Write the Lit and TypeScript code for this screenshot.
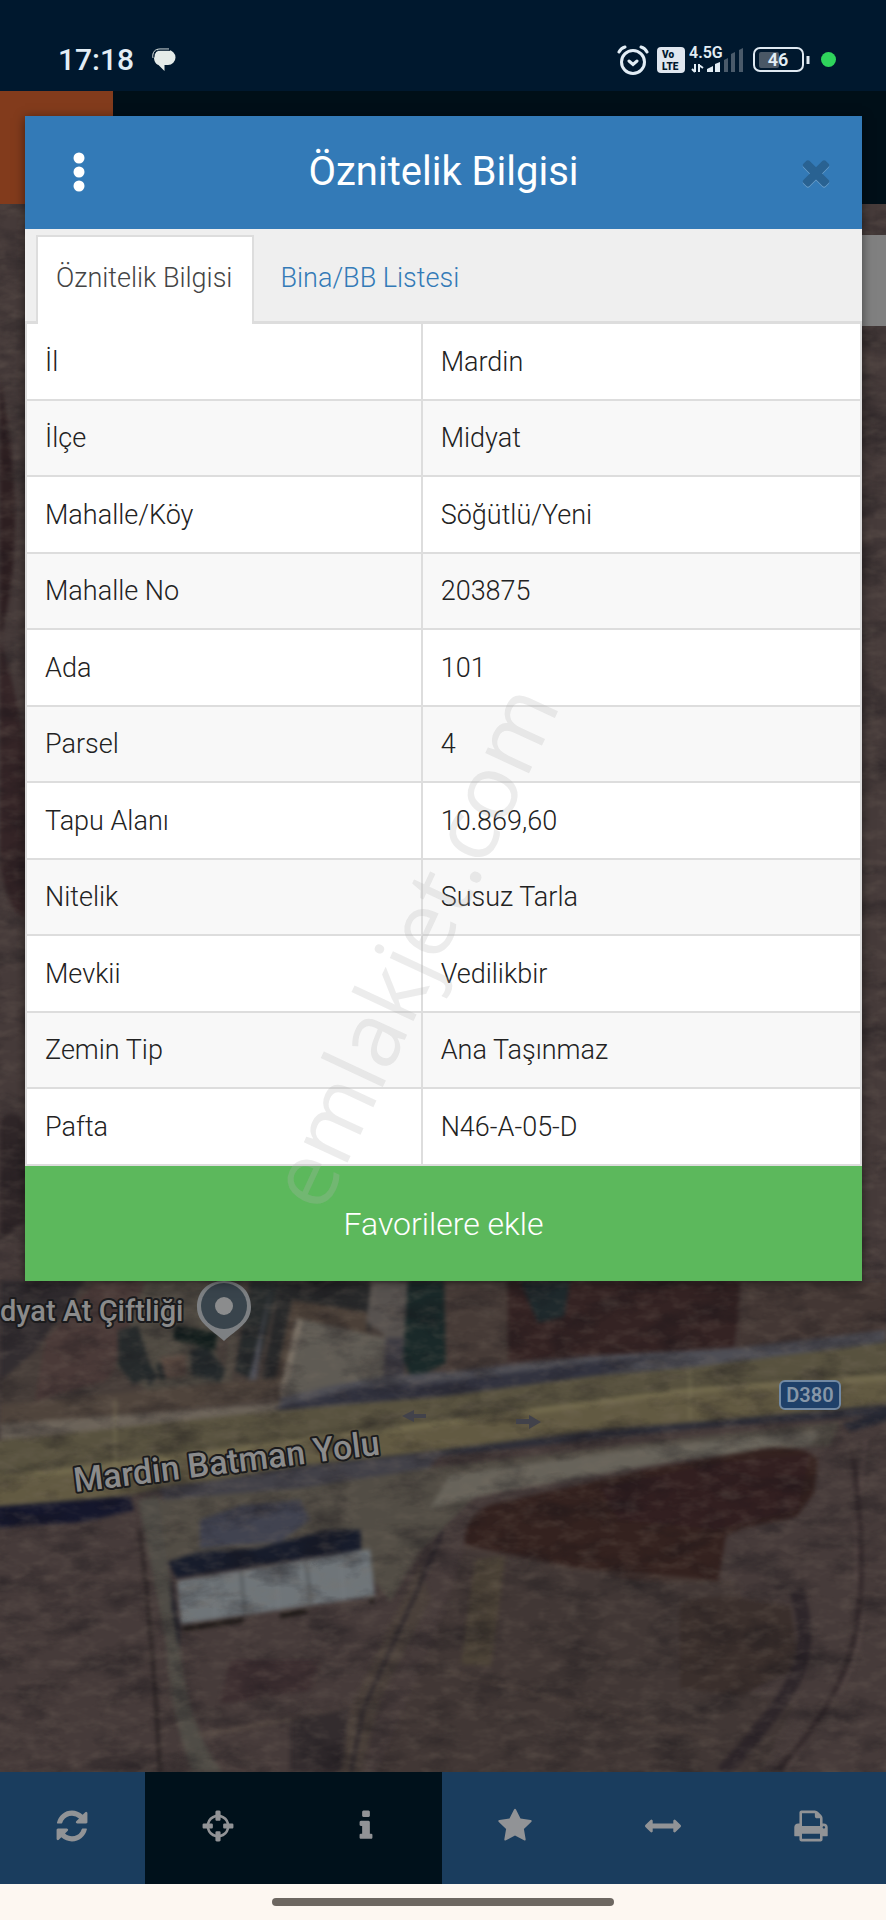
import { html, svg, css, LitElement } from "lit";
import { customElement, property, state } from "lit/decorators.js";
import { classMap } from "lit/directives/class-map.js";

interface ParcelField {
  label: string;
  value: string;
}

interface Tool {
  name: string;
  icon: string;
  dark?: boolean;
}

const icons: Record<string, string> = {
  refresh:
    "M1639 1056q0 5-1 7-64 268-268 434.5t-478 166.5q-146 0-282.5-55t-243.5-157l-129 129q-19 19-45 19t-45-19-19-45v-448q0-26 19-45t45-19h448q26 0 45 19t19 45-19 45l-137 137q71 66 161 102t187 36q134 0 250-65t186-179q11-17 53-117 8-23 30-23h192q13 0 22.5 9.5t9.5 22.5zm25-800v448q0 26-19 45t-45 19h-448q-26 0-45-19t-19-45 19-45l138-138q-148-137-349-137-134 0-250 65t-186 179q-11 17-53 117-8 23-30 23h-199q-13 0-22.5-9.5t-9.5-22.5v-7q65-268 270-434.5t480-166.5q146 0 284 55.5t245 156.5l130-129q19-19 45-19t45 19 19 45z",
  crosshairs:
    "M1325 1024h-109q-26 0-45-19t-19-45v-128q0-26 19-45t45-19h109q-32-108-112.5-188.5t-188.5-112.5v109q0 26-19 45t-45 19h-128q-26 0-45-19t-19-45v-109q-108 32-188.5 112.5t-112.5 188.5h109q26 0 45 19t19 45v128q0 26-19 45t-45 19h-109q32 108 112.5 188.5t188.5 112.5v-109q0-26 19-45t45-19h128q26 0 45 19t19 45v109q108-32 188.5-112.5t112.5-188.5zm339-192v128q0 26-19 45t-45 19h-143q-37 161-154.5 278.5t-278.5 154.5v143q0 26-19 45t-45 19h-128q-26 0-45-19t-19-45v-143q-161-37-278.5-154.5t-154.5-278.5h-143q-26 0-45-19t-19-45v-128q0-26 19-45t45-19h143q37-161 154.5-278.5t278.5-154.5v-143q0-26 19-45t45-19h128q26 0 45 19t19 45v143q161 37 278.5 154.5t154.5 278.5h143q26 0 45 19t19 45z",
  info: "M1216 1344v128q0 26-19 45t-45 19h-512q-26 0-45-19t-19-45v-128q0-26 19-45t45-19h64v-384h-64q-26 0-45-19t-19-45v-128q0-26 19-45t45-19h384q26 0 45 19t19 45v576h64q26 0 45 19t19 45zm-128-1152v192q0 26-19 45t-45 19h-256q-26 0-45-19t-19-45v-192q0-26 19-45t45-19h256q26 0 45 19t19 45z",
  star: "M1728 647q0 22-26 48l-363 354 86 500q1 7 1 20 0 21-10.5 35.5t-30.5 14.5q-19 0-40-12l-449-236-449 236q-22 12-40 12-21 0-31.5-14.5t-10.5-35.5q0-6 2-20l86-500-364-354q-25-27-25-48 0-37 56-46l502-73 225-455q19-41 49-41t49 41l225 455 502 73q56 9 56 46z",
  arrows:
    "M1792 896q0 26-19 45l-256 256q-19 19-45 19t-45-19-19-45v-128h-1024v128q0 26-19 45t-45 19-45-19l-256-256q-19-19-19-45t19-45l256-256q19-19 45-19t45 19 19 45v128h1024v-128q0-26 19-45t45-19 45 19l256 256q19 19 19 45z",
  print:
    "M448 1536h896v-256h-896v256zm0-640h896v-384h-160q-40 0-68-28t-28-68v-160h-640v640zm1152 64q0-26-19-45t-45-19-45 19-19 45 19 45 45 19 45-19 19-45zm128 0v416q0 13-9.5 22.5t-22.5 9.5h-224v160q0 40-28 68t-68 28h-960q-40 0-68-28t-28-68v-160h-224q-13 0-22.5-9.5t-9.5-22.5v-416q0-79 56.5-135.5t135.5-56.5h64v-544q0-40 28-68t68-28h672q40 0 88 20t76 48l152 152q28 28 48 76t20 88v256h64q79 0 135.5 56.5t56.5 135.5z",
  times:
    "M1490 1322q0 40-28 68l-136 136q-28 28-68 28t-68-28l-294-294-294 294q-28 28-68 28t-68-28l-136-136q-28-28-28-68t28-68l294-294-294-294q-28-28-28-68t28-68l136-136q28-28 68-28t68 28l294 294 294-294q28-28 68-28t68 28l136 136q28 28 28 68t-28 68l-294 294 294 294q28 28 28 68z"
};

@customElement("fa-icon")
export class FaIconElement extends LitElement {
  @property()
  name = "";

  override render() {
    return html`<svg viewBox="0 0 1792 1792" aria-hidden="true"><path d=${icons[this.name]} /></svg>`;
  }

  static styles = css`
    :host {
      display: block;
      width: 36px;
      height: 36px;
    }

    svg {
      display: block;
      width: 100%;
      height: 100%;
      fill: currentColor;
    }
  `;
}

@customElement("status-bar")
export class StatusBarElement extends LitElement {
  override render() {
    return html`
      <span class="time">17:18</span>
      <svg width="24" height="24" viewBox="0 0 24 24" fill="#e4ebe9">
        <path d="M8 2h8a7.5 7.5 0 0 1 0 15h-3.5v6l-6-6C3 16 2 12 2 9.5 2 5 4.5 2 8 2z" />
        <path d="M1 10C0 4 3 1 8 1h9" fill="none" stroke="#e4ebe9" stroke-width="1" />
        <path d="M2 9.5C2 5 4.5 2.3 8 2.3h10" fill="none" stroke="#00182e" stroke-width="1" />
      </svg>
      <div class="icons">
        <svg width="32" height="30" viewBox="0 0 32 30" fill="none" stroke="#e2edf5" stroke-width="3" stroke-linecap="round">
          <circle cx="16" cy="17" r="11.5" />
          <path d="M2 7q2-4 6-5M30 7q-2-4-6-5M12 16l4 3.5 4-3.5" />
        </svg>
        <div class="network">
          <svg class="volte" width="28" height="26" viewBox="0 0 28 26">
            <rect width="28" height="26" rx="4" fill="#dfe6ef" />
            <text x="5" y="11" font-size="10">Vo</text>
            <text x="5" y="23" font-size="10">LTE</text>
          </svg>
          <svg class="signal" width="56" height="36" viewBox="0 -3 56 36">
            <text x="0" y="13" font-size="16">4.5G</text>
            <path d="M6 19v8M3 24l3 3M10 27v-8M10 20l4 3" stroke="#e2edf5" stroke-width="2" fill="none" />
            <path d="M18 27v-3l6-3v6zM26 27v-8l5-2v10z" fill="#e2edf5" />
            <path d="M35 27V15l4-2v14zM42 27V9l4-2v20zM50 27V5l4-2v24z" fill="#4a5a6a" />
          </svg>
        </div>
        <svg class="battery" width="58" height="26" viewBox="0 0 58 26">
          <rect x="6" y="5" width="20" height="16" rx="2" fill="#4a5866" />
          <rect x="1" y="1" width="49" height="23" rx="6" fill="none" stroke="#dfe9f2" stroke-width="2" />
          <path d="M55 9v8" stroke="#dfe9f2" stroke-width="3" />
          <text x="25" y="19" text-anchor="middle" font-size="18">46</text>
        </svg>
        <span class="dot"></span>
      </div>
    `;
  }

  static styles = css`
    :host {
      display: flex;
      align-items: center;
      gap: 18px;
      box-sizing: border-box;
      height: 91px;
      padding: 28px 50px 0 58px;
      background: #00182e;
      color: #e2edf5;
      font-family: Roboto, sans-serif;
    }

    .time {
      font-size: 30px;
      font-weight: 500;
    }

    .icons {
      display: flex;
      align-items: center;
      gap: 8px;
      margin-left: auto;
    }

    .network {
      display: flex;
      align-items: center;
      gap: 4px;
    }

    .volte text {
      font-weight: 900;
      fill: #00182e;
    }

    .signal text,
    .battery text {
      font-weight: 600;
      fill: #e2edf5;
    }

    .dot {
      width: 15px;
      height: 15px;
      margin-left: 2px;
      border-radius: 50%;
      background: #2fd45c;
    }
  `;
}

@customElement("satellite-map")
export class SatelliteMapElement extends LitElement {
  terrain() {
    return svg`
      <path d="M0 380q30 150 0 260z" fill="#2d1f21" />
      <path d="M0 640q20 60 26 120v160q-20-10-26-60z" fill="#352527" />
      <path d="M0 1120q24-20 26 20v80l-26 20z" fill="#2f2628" />
      <path d="M0 1281h443v120L0 1440z" fill="#463d39" />
      <path d="M0 1281h85l-50 70-35 30z" fill="#322d30" />
      <path d="M95 1281h80l-10 30-60 70-70 20 10-60z" fill="#4a3a38" />
      <path d="M145 1281h100l-30 70 20 40-80 5-40-30z" fill="#4f4a42" />
      <path d="M118 1330l20-5 15 50-20 10-15-20zM250 1281h30l-25 100-20-10z" fill="#272b2c" />
      <path d="M140 1372l8-10 10 14-8 10zM156 1364l12-2 2 16-10 2zM190 1350l16-4 20 24-6 12-28-6z" fill="#23282a" />
      <path d="M160 1358l26-4v22l-20 2z" fill="#5d4c43" />
      <path d="M175 1325l43 8-3 18-42-12z" fill="#121d1c" />
      <path d="M236 1281h10l-16 110h-8z" fill="#4d4740" />
      <path d="M262 1335l10-50-24 98 8 3z" fill="#55565f" />
      <path d="M280 1281h90v50l-75-15-20 80-15-5z" fill="#28292a" />
      <path d="M292 1300l75 12v24l-73-17-13 76-8-3z" fill="#4b4038" />
      <path d="M297 1318l88 20-2 45-105 13z" fill="#5f5b54" />
      <path d="M297 1318l6 4-19 74h-6z" fill="#7a7166" />
      <path d="M372 1281h36l-4 95-22 6 2-48-18-12z" fill="#57524f" />
      <path d="M386 1338h18v40l-20 4z" fill="#3d3b42" />
      <path d="M408 1281h36l6 80-38 18-9-20z" fill="#1a2929" />
      <path d="M444 1281h76l-12 80-62 15z" fill="#463b37" />
      <path d="M508 1281h236l-10 66-226 14z" fill="#342323" />
      <path d="M520 1281h50l-6 36-26 6z" fill="#1f292c" />
      <path d="M740 1281h146v60l-150 10z" fill="#433734" />

      <path d="M0 1405l280-28v20L0 1432z" fill="#4f443c" />
      <path d="M0 1441q140-14 283-28v-10L0 1424z" fill="#6b6359" />
      <path d="M280 1398q90-24 168-26l140-16 150-8 148-18v16L600 1380l-320 32z" fill="#4e4e55" />
      <path d="M275 1408l80-20 88-6 150-20 55-4-60 22-160 18-153 12z" fill="#32333f" />

      <path d="M-9 1441q149-15 292-31l160-14 150-20 110-10 192-25v63l-195 18-100 8-157 20-143 18-150 24-159 23z" fill="#58523f" />
      <path d="M-9 1479q249-29 452-53 150-26 257-38l195-11v25l-195 18-100 8-157 20-143 18-150 24-159 23z" fill="#625a42" />
      <path d="M-9 1472l452-55 260-32 192-15" fill="none" stroke="#474334" stroke-width="2" />
      <path d="M-9 1480q249-29 452-57l240-32 212-14" fill="none" stroke="#726a4d" stroke-width="6" />
      <path d="M115 1400v68M690 1370v50" stroke="#8c8562" />

      <path d="M130 1494l170-28 143-16 157-20 100-8 195-18v10l-195 14-257 28-143 22-150 14z" fill="#2d2e38" />
      <path d="M160 1487l283-36-20 24-120 17-140 8z" fill="#424148" />
      <path d="M-9 1507l139-11 4 14-50 12-93 6z" fill="#15172c" />

      <path d="M158 1500l142-12 143-22 207-24 190-20-10 24-90 2-140 22-120 22-60 60-30 50-40-55-195 14z" fill="#524d45" />
      <path d="M450 1475l200-28 170-16-10 15-130 14-190 34-60 14z" fill="#67635a" />
      <path d="M200 1520l40-14 60-6 10 20-30 22-80 6z" fill="#414350" />
      <path d="M138 1500l20-6 22 150q6 80 42 128h-30q-22-60-26-130z" fill="#4f4c46" />
      <path d="M140 1530q14 120 20 242" fill="none" stroke="#241e1f" stroke-width="3" />

      <path d="M168 1562l30-10 60-4 70-18h33v20l-55 8-130 20z" fill="#171c2b" />
      <path d="M170 1570l10 60v20l-8-40z" fill="#20212a" />
      <path d="M177 1581l193-32 5 47-194 28z" fill="#6f7579" />
      <path d="M241 1570l4 46M306 1559l5 47" stroke="#4a4e51" stroke-width="2" />
      <path d="M212 1575l3 45M276 1565l3 46M340 1554l4 47" stroke="#7b8085" />
      <path d="M183 1629l60-9M280 1616l27-5M370 1600h4" stroke="#15120f" stroke-width="4" />

      <path d="M420 1565l-20 40-50 105-10 70h20l20-80 50-100z" fill="#4a403a" />
      <path d="M443 1530l-30 70-50 110-12 62" fill="none" stroke="#29242a" stroke-width="3" />
      <path d="M200 1735l160-28" stroke="#564a43" stroke-width="3" />
      <path d="M230 1660h90l-10 30-90 14z" fill="#3c2e30" />
      <path d="M290 1720l60-12-10 64h-50z" fill="#332c2e" />

      <path d="M465 1547l115 20 160 18-16 100 70 20-40 80H372l71-170z" fill="#413735" />
      <path d="M465 1545q-2-28 25-40l150-34 120-22q40-6 58 10l-4 34-18 24-50 10-20 8-8 48-86-4-60-12z" fill="#34221f" />
      <path d="M600 1488l120-26 90-8-12 56-80 20-100-10z" fill="#321f20" />
      <path d="M475 1560l30-4-14 110-30-2z" fill="#4c4337" />
      <path d="M680 1600l50-4 60 10 10 60-60 30-60-8z" fill="#3a2f2c" />
      <path d="M443 1670l270 70M465 1548l100 20 170 16" fill="none" stroke="#4d413c" stroke-width="3" />
      <path d="M796 1590q22 60-14 110t-60 72" fill="none" stroke="#2e262a" stroke-width="14" />
      <path d="M866 1440q-16 120-4 180-6 60-40 90l-36 62" fill="none" stroke="#544745" stroke-width="4" />
      <path d="M852 1450q16 110 4 180t-80 142" fill="none" stroke="#32282a" stroke-width="5" />
      <path d="M842 1424l53-15v10l-44 12z" fill="#262833" />
    `;
  }

  override render() {
    return html`
      <svg class="map" viewBox="0 204 886 1568" preserveAspectRatio="xMidYMax slice" role="img" aria-label="Uydu haritası">
        <defs>
          <filter id="dark" x="0" y="0" width="100%" height="100%" color-interpolation-filters="sRGB">
            <feTurbulence type="fractalNoise" baseFrequency="0.02 0.04" numOctaves="5" seed="4" />
            <feColorMatrix values="0 0 0 0 0.08  0 0 0 0 0.07  0 0 0 0 0.09  2 0 0 0 -0.9" />
          </filter>
          <filter id="light" x="0" y="0" width="100%" height="100%" color-interpolation-filters="sRGB">
            <feTurbulence type="fractalNoise" baseFrequency="0.05 0.1" numOctaves="3" seed="11" />
            <feColorMatrix values="0 0 0 0 0.5  0 0 0 0 0.45  0 0 0 0 0.4  0 1.6 0 0 -0.7" />
          </filter>
          <filter id="soft" color-interpolation-filters="sRGB"><feGaussianBlur stdDeviation="2" /></filter>
        </defs>
        <rect y="204" width="886" height="1568" fill="#463b3a" />
        <g filter="url(#soft)">${this.terrain()}</g>
        <rect y="204" width="886" height="1568" filter="url(#dark)" opacity="0.5" />
        <rect y="204" width="886" height="1568" filter="url(#light)" opacity="0.3" />

        <path d="M402 1416l12-6v4h12v4h-12v4zM541 1422l-12-7v4h-13v5h13v5z" fill="#42424a" />
        <path d="M224 1281c-18 0-27 12-27 26 0 16 14 22 27 34 13-12 27-18 27-34 0-14-9-26-27-26z" fill="#7d8083" />
        <circle cx="224" cy="1306" r="23" fill="#39444c" />
        <circle cx="224" cy="1306" r="9" fill="#8b8c8d" />
        <text class="place" x="0" y="1321">dyat At Çiftliği</text>
        <text class="road" transform="translate(75 1492) rotate(-7)">Mardin Batman Yolu</text>
        <rect x="780" y="1381" width="60" height="28" rx="5" fill="#1f4069" stroke="#7289a3" stroke-width="2" />
        <text class="shield" x="810" y="1402" text-anchor="middle">D380</text>
      </svg>
      <div class="drawer"></div>
    `;
  }

  static styles = css`
    :host {
      display: block;
      position: relative;
      overflow: hidden;
      font-family: Roboto, sans-serif;
    }

    .map {
      position: absolute;
      inset: 0;
      width: 100%;
      height: 100%;
    }

    .place,
    .road {
      fill: #8b8b8b;
      stroke: #1b1b1d;
      stroke-width: 4px;
      paint-order: stroke;
      stroke-linejoin: round;
      font-weight: 500;
    }

    .place {
      font-size: 29px;
    }

    .road {
      font-size: 34px;
    }

    .shield {
      fill: #8797a8;
      font-size: 20px;
      font-weight: 600;
    }

    .drawer {
      position: absolute;
      top: 31px;
      right: 0;
      width: 24px;
      height: 91px;
      background: #808080;
    }
  `;
}

@customElement("parcel-dialog")
export class ParcelDialogElement extends LitElement {
  @property({ type: Array })
  fields: ParcelField[] = [];

  @state()
  private activeTab = 0;

  private tabs = ["Öznitelik Bilgisi", "Bina/BB Listesi"];

  override render() {
    return html`
      <header class="header">
        <button class="menu" aria-label="Menü">
          <svg width="12" height="40" viewBox="0 0 12 40" fill="#fff">
            <circle cx="6" cy="6" r="5.5" />
            <circle cx="6" cy="20" r="5.5" />
            <circle cx="6" cy="34" r="5.5" />
          </svg>
        </button>
        <h1 class="title">Öznitelik Bilgisi</h1>
        <button class="close" aria-label="Kapat"><fa-icon class="times" name="times"></fa-icon></button>
      </header>

      <div class="tabs" role="tablist">
        ${this.tabs.map(
          (tab, i) => html`
            <button
              role="tab"
              aria-selected=${i === this.activeTab ? "true" : "false"}
              class=${classMap({ tab: true, active: i === this.activeTab })}
              @click=${() => (this.activeTab = i)}
            >
              ${tab}
            </button>
          `
        )}
      </div>

      <table class="table">
        <tbody>
          ${this.fields.map(
            (f) => html`
              <tr>
                <th scope="row">${f.label}</th>
                <td>${f.value}</td>
              </tr>
            `
          )}
        </tbody>
      </table>

      <button class="favorite">Favorilere ekle</button>
    `;
  }

  static styles = css`
    :host {
      display: flex;
      flex-direction: column;
      background: #fff;
      box-shadow: 0 2px 10px rgba(0, 0, 0, 0.5);
      font-family: Roboto, sans-serif;
      font-weight: 300;
      color: #222;
    }

    button {
      border: none;
      background: none;
      padding: 0;
      font: inherit;
      color: inherit;
      cursor: pointer;
    }

    .header {
      display: grid;
      grid-template-columns: 108px 1fr 108px;
      align-items: center;
      height: 113px;
      padding-bottom: 2px;
      box-sizing: border-box;
      background: #337ab7;
      color: #fff;
    }

    .title {
      margin: 0;
      font-size: 40px;
      font-weight: 400;
      text-align: center;
    }

    .menu,
    .close {
      display: grid;
      place-items: center;
      height: 100%;
    }

    .close {
      padding-left: 16px;
    }

    .times {
      width: 40px;
      height: 40px;
      color: #296292;
      filter: drop-shadow(0 1px 0 #6b9fcb);
    }

    .tabs {
      display: flex;
      gap: 5px;
      box-sizing: border-box;
      height: 95px;
      padding: 6px 11px 0;
      background: #efefef;
      border-bottom: 3px solid #ddd;
    }

    .tab {
      padding: 0 19px 2px;
      border: 2px solid transparent;
      border-bottom: none;
      font-size: 27px;
      color: #337ab7;
    }

    .tab.active {
      margin-bottom: -3px;
      padding: 0 20px 5px 18px;
      border-color: #ddd;
      background: #fff;
      color: #444;
    }

    .table {
      width: 100%;
      table-layout: fixed;
      border-collapse: separate;
      border-spacing: 0;
      border: solid #ddd;
      border-width: 0 2px;
      font-size: 27px;
    }

    tr {
      height: 77px;
    }

    tr:nth-child(even) {
      height: 76px;
      background: #f8f8f8;
    }

    th,
    td {
      box-sizing: border-box;
      padding: 0 18px;
      border-bottom: 2px solid #ddd;
      text-align: left;
      font-weight: 300;
    }

    th {
      width: 47.5%;
      border-right: 2px solid #ddd;
    }

    .favorite {
      height: 115px;
      background: #5cb85c;
      color: #fff;
      font-size: 32px;
    }
  `;
}

@customElement("app-root")
export class AppRootElement extends LitElement {
  private fields: ParcelField[] = [
    { label: "İl", value: "Mardin" },
    { label: "İlçe", value: "Midyat" },
    { label: "Mahalle/Köy", value: "Söğütlü/Yeni" },
    { label: "Mahalle No", value: "203875" },
    { label: "Ada", value: "101" },
    { label: "Parsel", value: "4" },
    { label: "Tapu Alanı", value: "10.869,60" },
    { label: "Nitelik", value: "Susuz Tarla" },
    { label: "Mevkii", value: "Vedilikbir" },
    { label: "Zemin Tip", value: "Ana Taşınmaz" },
    { label: "Pafta", value: "N46-A-05-D" }
  ];

  private tools: Tool[] = [
    { name: "Yenile", icon: "refresh" },
    { name: "Konum", icon: "crosshairs", dark: true },
    { name: "Bilgi", icon: "info", dark: true },
    { name: "Favoriler", icon: "star" },
    { name: "Ölçüm", icon: "arrows" },
    { name: "Yazdır", icon: "print" }
  ];

  override render() {
    return html`
      <status-bar></status-bar>
      <div class="app-header"><div class="brand"></div></div>
      <satellite-map class="map"></satellite-map>
      <nav class="toolbar">
        ${this.tools.map(
          (t) => html`
            <button class=${classMap({ tool: true, dark: !!t.dark })} aria-label=${t.name}>
              <fa-icon name=${t.icon}></fa-icon>
            </button>
          `
        )}
      </nav>
      <div class="gesture"><div class="pill"></div></div>

      <parcel-dialog class="dialog" .fields=${this.fields}></parcel-dialog>

      <svg class="watermark" viewBox="0 0 886 1920" preserveAspectRatio="xMidYMin meet" aria-hidden="true">
        <text transform="translate(442 960) rotate(-65)" text-anchor="middle">emlakjet.com</text>
      </svg>
    `;
  }

  static styles = css`
    :host {
      display: flex;
      flex-direction: column;
      position: relative;
      min-height: 100vh;
    }

    .app-header {
      height: 113px;
      background: #000f18;
    }

    .brand {
      width: 113px;
      height: 100%;
      background: #823b1c;
    }

    .map {
      flex: 1;
      min-height: 1100px;
    }

    .toolbar {
      display: grid;
      grid-template-columns: 49fr repeat(5, 50fr);
      height: 112px;
      background: #1a3d5e;
    }

    .tool {
      display: grid;
      place-items: center;
      padding: 0 2px 4px 0;
      border: none;
      background: none;
      color: #919396;
      cursor: pointer;
    }

    .tool.dark {
      background: #00111b;
    }

    .gesture {
      display: flex;
      justify-content: center;
      box-sizing: border-box;
      height: 36px;
      padding-top: 14px;
      background: #fdf7f1;
    }

    .pill {
      width: 342px;
      height: 8px;
      border-radius: 4px;
      background: #6d6761;
    }

    .dialog {
      position: absolute;
      top: 116px;
      left: 25px;
      right: 24px;
    }

    .watermark {
      position: absolute;
      top: 0;
      left: 0;
      width: 100%;
      pointer-events: none;
    }

    .watermark text {
      font-family: "Open Sans", sans-serif;
      font-size: 90px;
      font-weight: 500;
      fill: rgba(180, 180, 180, 0.25);
    }
  `;
}
